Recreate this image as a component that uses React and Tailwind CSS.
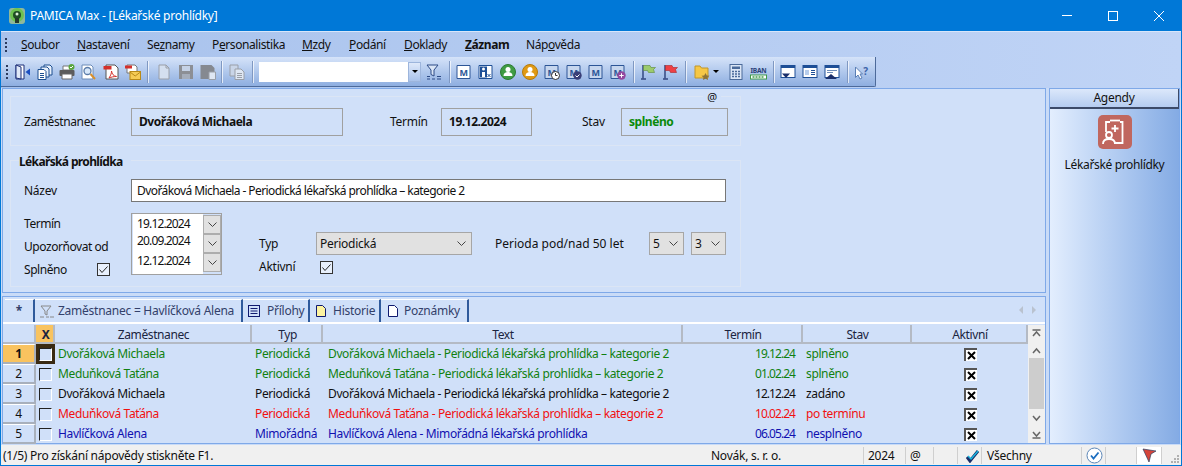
import React from "react";

const font = "font-['Noto_Sans',sans-serif] text-[12px] tracking-[-0.25px]";

// toolbar icons, all drawn on a 16x16 box
const Svg = ({ children, className = "w-4 h-4" }) => (
    <svg viewBox="0 0 16 16" className={className} fill="none">{children}</svg>
);

const Door = () => (
    <Svg><path d="M1 1h8v14H1z" fill="#fff" stroke="#1c2f78" /><path d="M1 1l5 2v12l-5-1z" fill="#dfe8f8" stroke="#1c2f78" /><path d="M15 4.500v7L10.500 8z" fill="#1c4fc0" /></Svg>
);
const Copies = () => (
    <Svg><path d="M7 1h6l2 2v8H7z" fill="#e8f0fc" stroke="#1c4f90" /><path d="M4 3h6l2 2v8H4z" fill="#e8f0fc" stroke="#1c4f90" /><path d="M1 5.500h6l2 2v8H1z" fill="#fff" stroke="#1c4f90" /><path d="M3 9.500h4M3 11.500h4M3 13.500h4" stroke="#1c4f90" /></Svg>
);
const Printer = () => (
    <Svg><path d="M4 2h7v4H4z" fill="#fff" stroke="#777" /><rect x="0.500" y="6" width="15" height="6" rx="1" fill="#5c5c5c" /><path d="M3 10h10v5H3z" fill="#fff" stroke="#666" /><circle cx="12.500" cy="3" r="3" fill="#5aa63c" /><path d="M11 3l1 1 2-2" stroke="#fff" /></Svg>
);
const Preview = () => (
    <Svg><path d="M1 1h9l2 2v12H1z" fill="#fff" stroke="#6d8cb8" /><circle cx="6.500" cy="7" r="3.500" fill="#d8e8fa" stroke="#5a7ba8" strokeWidth="1.300" /><path d="M9.500 10l4.500 5" stroke="#d9902c" strokeWidth="2" /></Svg>
);
const Pdf = () => (
    <Svg><path d="M3 1h9l3 3v11H3z" fill="#fff" stroke="#555" /><rect x="0.500" y="2" width="8" height="3.500" fill="#d4302b" /><path d="M6 14c2-3 2.500-5 2.500-7 .5 3 2 5 5 5.500-3 0-5 .5-7.500 1.500z" stroke="#d4302b" /></Svg>
);
const PdfMail = () => (
    <Svg><path d="M2 1h8l2 2v6H2z" fill="#fff" stroke="#777" /><rect x="0" y="1.500" width="7" height="3" fill="#d4302b" /><rect x="5" y="7.500" width="10.500" height="8" fill="#f6cb55" stroke="#b98a18" /><path d="M5 8l5.200 4 5.300-4" stroke="#b98a18" /></Svg>
);
const Blank = () => (
    <Svg><path d="M3 1h7l3 3v11H3z" fill="#d4dfef" stroke="#9a9fa8" /><path d="M10 1v3h3" stroke="#9a9fa8" /></Svg>
);
const Save = () => (
    <Svg><path d="M1 1h14v14H1z" fill="#8c8f95" /><rect x="4" y="2" width="8" height="5" fill="#c5d2e6" /><rect x="4" y="10" width="8" height="5" fill="#a5adba" /></Svg>
);
const SaveAll = () => (
    <Svg><path d="M0.500 1h11l3 3v4h-3v7h-11z" fill="#858990" /><path d="M9 8h6.500v7.500H9z" fill="#dfe7f3" stroke="#9a9fa8" /></Svg>
);
const CopyGray = () => (
    <Svg><path d="M1 1h8v11H1z" fill="#c9d5e8" stroke="#9a9fa8" /><path d="M6 5h6l3 3v7.500H6z" fill="#dfe7f3" stroke="#9a9fa8" /><path d="M8 9.500h5M8 11.500h5M8 13.500h5" stroke="#9a9fa8" /></Svg>
);
const FilterList = () => (
    <Svg><path d="M1 1h11L8 6v6l-3-1.500V6z" fill="#dbe6f6" stroke="#2c4a86" /><path d="M1 12.500h3M1 15h3M6 15h3M11 12.500h4M11 15h4" stroke="#2c4a86" /></Svg>
);
const MBox = ({ dim }) => (
    <>
        <path d="M1 1.500h13v13H1z" fill={dim ? "#c6d6ee" : "#fff"} stroke="#2c5596" />
        <text x="7.500" y="11.500" textAnchor="middle" fontSize="9" fontWeight="700" fontFamily="Noto Sans" fill="#2c5596">M</text>
    </>
);
const M = ({ dim }) => <Svg><MBox dim={dim} /></Svg>;
const PersonX = () => (
    <Svg><path d="M1 1.500h13v13H1z" fill="#fff" stroke="#1e4f96" /><rect x="2" y="2.500" width="7" height="11" fill="#1e4f96" /><circle cx="5.500" cy="5" r="1.500" fill="#fff" /><path d="M4 8h3v5H4z" fill="#fff" /><path d="M9.500 10l3 3M12.500 10l-3 3" stroke="#1e4f96" /></Svg>
);
const PersonRound = ({ bg, edge }) => (
    <Svg><circle cx="8" cy="8" r="7.500" fill={bg} stroke={edge} /><circle cx="8" cy="5.500" r="2.500" fill="#fff" /><path d="M3.500 12c0-3 2-4 4.500-4s4.500 1 4.500 4z" fill="#fff" /></Svg>
);
const MClock = () => (
    <Svg><MBox dim /><circle cx="11.500" cy="11.500" r="4" fill="#fff" stroke="#333" /><path d="M11.500 9v2.500h2" stroke="#333" /></Svg>
);
const MCheck = () => (
    <Svg><MBox dim /><circle cx="11.500" cy="11.500" r="4.200" fill="#3a3f78" /><path d="M9.500 11.500l1.500 1.500 2.500-2.500" stroke="#fff" /></Svg>
);
const MPlus = () => (
    <Svg><MBox dim /><circle cx="11.500" cy="11.500" r="4.200" fill="#94479f" /><path d="M9.300 11.500h4.400M11.500 9.300v4.400" stroke="#fff" /></Svg>
);
const Flag = ({ fill, edge }) => (
    <Svg><path d="M3 1v13.500" stroke="#2c3f7a" strokeWidth="1.400" /><path d="M1 15h5" stroke="#2c3f7a" strokeWidth="1.400" /><path d="M3.500 1.500h6.500l1 2h4.500l-2 2 1 3h-6l-1-2h-4z" fill={fill} stroke={edge} strokeWidth="0.600" /></Svg>
);
const Folder = () => (
    <Svg><path d="M1 2h5l1.500 2h6.500v10H1z" fill="#f6c745" stroke="#c0962a" /><path d="M11.500 9l1.300 2.500 2.700.3-2 1.700.6 2.500-2.600-1.300-2.600 1.300.6-2.500-2-1.700 2.700-.3z" fill="#8e7436" /></Svg>
);
const Calc = () => (
    <Svg><rect x="2" y="0.500" width="12" height="15" fill="#dbe6f6" stroke="#4a6a9a" /><rect x="4" y="2.500" width="8" height="2.500" fill="#4a6a9a" /><path d="M4 7.500h2M7 7.500h2M10 7.500h2M4 10h2M7 10h2M10 10h2M4 12.500h2M7 12.500h2M10 12.500h2" stroke="#4a6a9a" strokeWidth="1.400" /></Svg>
);
const Iban = () => (
    <svg viewBox="0 0 17 16" className="w-[17px] h-4" fill="none">
        <text x="0.500" y="8.500" textLength="16" lengthAdjust="spacingAndGlyphs" fontSize="7" fontWeight="700" fontFamily="Noto Sans" fill="#2b3f78">IBAN</text>
        <rect x="0.500" y="11" width="16" height="4" fill="#fff" stroke="#3f9a4a" />
        <path d="M2.500 13h12" stroke="#3f9a4a" strokeWidth="1.600" strokeDasharray="2 1" />
    </svg>
);
const Win = ({ variant }) => (
    <Svg>
        <rect x="1" y="1.500" width="14" height="12" fill="#fff" stroke="#1e4f96" />
        <rect x="1" y="1.500" width="14" height="2.500" fill="#1e4f96" />
        {variant === "down" && <path d="M2 9.500h8L6 14z" fill="#1b2f6a" />}
        {variant === "list" && <><path d="M3 6h4v5H3z" fill="#b7cdec" /><path d="M9 6.500h4M9 8.500h4M9 10.500h4" stroke="#1e4f96" /></>}
        {variant === "up" && <><path d="M3 6.500h10M3 8.500h6" stroke="#6d8cb8" /><path d="M1 15l6-5 6 5z" fill="#1b2f6a" /></>}
    </Svg>
);
const HelpArrow = () => (
    <Svg><path d="M1.500 3l7 7H6l2 4-2 1-2-4-2.500 2.500z" fill="#fff" stroke="#5b7fb5" /><text x="11.500" y="10.500" textAnchor="middle" fontSize="10" fontWeight="700" fontFamily="Noto Sans" fill="#3c63a8">?</text></Svg>
);

const Grip = () => (
    <div className="flex flex-col gap-[2px] w-[2px]">
        {[0, 1, 2, 3].map((i) => <div key={i} className="w-[2px] h-[2px] bg-[#2b3a5c]" />)}
    </div>
);

const ToolSep = ({ className = "" }) => (
    <div className={`w-[2px] h-[22px] border-l border-[#7f98c2] bg-white/70 shrink-0 ${className}`} />
);

const Tool = ({ children }) => <div className="w-[22px] h-[22px] flex items-center justify-center shrink-0">{children}</div>;

// underlined access key in the menu
const menu = [
    { before: "", key_: "S", after: "oubor", w: "w-[56px]" },
    { before: "", key_: "N", after: "astavení", w: "w-[70px]" },
    { before: "Se", key_: "z", after: "namy", w: "w-[65px]" },
    { before: "P", key_: "e", after: "rsonalistika", w: "w-[90px]" },
    { before: "", key_: "M", after: "zdy", w: "w-[47px]" },
    { before: "", key_: "P", after: "odání", w: "w-[55px]" },
    { before: "", key_: "D", after: "oklady", w: "w-[61px]" },
    { before: "", key_: "Z", after: "áznam", w: "w-[61px] font-bold", },
    { before: "Náp", key_: "o", after: "věda", w: "w-[70px]" },
];

const ReadField = ({ className, children }) => (
    <div className={`h-[28px] border border-[#a0a0a0] flex items-center pl-[7px] font-bold tracking-[-0.45px] ${className}`}>{children}</div>
);

const Check = () => (
    <div className="w-[13px] h-[13px] border border-[#333] bg-[#e8f0fc] flex items-center justify-center">
        <svg viewBox="0 0 11 11" className="w-[11px] h-[11px]" fill="none"><path d="M1.500 5.500l2.500 3L9.500 2.500" stroke="#222" /></svg>
    </div>
);

const Chevron = ({ className = "w-[9px] h-[5px]" }) => (
    <svg viewBox="0 0 9 5" className={className} fill="none"><path d="M0.500 0.500L4.500 4.500L8.500 0.500" stroke="#444" /></svg>
);

const DateSpin = () => (
    <div className="w-[18px] h-[19px] bg-[#e1e1e1] border border-[#adadad] flex items-center justify-center">
        <Chevron />
    </div>
);

const Select = ({ className, children }) => (
    <div className={`h-[23px] bg-[#e1e1e1] border border-[#a6a6a6] flex items-center justify-between pl-[3px] pr-[5px] shrink-0 ${className}`}>
        <span>{children}</span>
        <Chevron />
    </div>
);

const rows = [
    { n: 1, name: "Dvořáková Michaela", typ: "Periodická", text: "Dvořáková Michaela - Periodická lékařská prohlídka – kategorie 2", date: "19.12.24", stav: "splněno", color: "text-[#108010]", active: true },
    { n: 2, name: "Meduňková Taťána", typ: "Periodická", text: "Meduňková Taťána - Periodická lékařská prohlídka – kategorie 2", date: "01.02.24", stav: "splněno", color: "text-[#108010]" },
    { n: 3, name: "Dvořáková Michaela", typ: "Periodická", text: "Dvořáková Michaela - Periodická lékařská prohlídka – kategorie 2", date: "12.12.24", stav: "zadáno", color: "text-[#101010]" },
    { n: 4, name: "Meduňková Taťána", typ: "Periodická", text: "Meduňková Taťána - Periodická lékařská prohlídka – kategorie 2", date: "10.02.24", stav: "po termínu", color: "text-[#f01010]" },
    { n: 5, name: "Havlíčková Alena", typ: "Mimořádná", text: "Havlíčková Alena - Mimořádná lékařská prohlídka", date: "06.05.24", stav: "nesplněno", color: "text-[#1010b0]" },
];

const HeadCell = ({ className, children }) => (
    <div className={`h-[19px] pt-[2px] pl-[2px] border-r-2 border-b-2 border-[#b4bac4] flex items-center justify-center text-[#1a2440] tracking-[-0.4px] shrink-0 ${className}`}>{children}</div>
);

const ActiveBox = () => (
    <div className="w-[13px] h-[13px] bg-white border-t-2 border-l-2 border-[#555] flex items-center justify-center">
        <svg viewBox="0 0 9 9" className="w-[9px] h-[9px]" fill="none"><path d="M1 1l7 7M8 1l-7 7" stroke="#000" strokeWidth="2" /></svg>
    </div>
);

const ScrollArrow = ({ d }) => (
    <svg viewBox="0 0 9 8" className="w-[9px] h-[8px]" fill="none"><path d={d} stroke="#666" strokeWidth="1.500" /></svg>
);

const Tab = ({ className, icon, children }) => (
    <div className={`h-[23px] bg-[#d0e0f9] border-r-2 border-[#2f5a9c] border-t border-t-white flex items-center text-[#33406a] shrink-0 ${className}`}>
        {icon}
        {children}
    </div>
);

const StatusCell = ({ className, children }) => (
    <div className={`h-[17px] border-r border-[#cfcfcf] flex items-center shrink-0 ${className}`}>{children}</div>
);

export default function App() {
    return (
        <div className={`w-[1182px] h-[466px] overflow-hidden flex flex-col bg-[#0078d7] text-[#111] ${font}`}>
            {/* title bar */}
            <div className="h-[31px] shrink-0 flex items-center bg-[#0078d7] text-white">
                <svg viewBox="0 0 16 16" className="w-4 h-4 ml-[9px]">
                    <rect width="16" height="16" rx="3" fill="#8fb89a" />
                    <circle cx="8" cy="7" r="7" fill="#6cc24f" />
                    <circle cx="8" cy="7" r="4" fill="#1f4d24" />
                    <circle cx="8" cy="6" r="1.500" fill="#dff0d8" />
                    <rect x="6" y="10" width="4" height="5" fill="#24382a" />
                </svg>
                <span className="ml-[5px]">PAMICA Max - [Lékařské prohlídky]</span>
                <div className="ml-auto flex items-center">
                    <div className="w-[46px] flex justify-center"><div className="w-[10px] h-[1px] bg-white" /></div>
                    <div className="w-[46px] flex justify-center"><div className="w-[10px] h-[10px] border border-white" /></div>
                    <div className="w-[46px] flex justify-center">
                        <svg viewBox="0 0 10 10" className="w-[10px] h-[10px]" fill="none"><path d="M0 0l10 10M10 0L0 10" stroke="#fff" /></svg>
                    </div>
                </div>
            </div>

            <div className="flex-1 min-h-0 mx-[1px] mb-[1px] flex flex-col bg-[#c9dbf7] border-t border-[#d8e6fa]">
                {/* menu + toolbar */}
                <div className="h-[56px] shrink-0 bg-gradient-to-r from-[#a8c2ec] to-[#c0d4f6]">
                    <div className="h-[25px] flex items-center pl-[4px]">
                        <Grip />
                        <div className="flex ml-[14px] tracking-[-0.4px]">
                            {menu.map((m) => (
                                <div key={m.after} className={`${m.w} shrink-0`}>
                                    {m.before}<span className="underline">{m.key_}</span>{m.after}
                                </div>
                            ))}
                        </div>
                    </div>
                    <div className="w-[875px] h-[30px] flex items-center pl-[5px] bg-gradient-to-b from-[#d5e3f9] to-[#8eaee0] border-r border-b border-[#4d6a9a] rounded-br-[2px]">
                        <Grip />
                        <div className="flex items-center ml-[4px]">
                            <Tool><Door /></Tool><Tool><Copies /></Tool><Tool><Printer /></Tool><Tool><Preview /></Tool><Tool><Pdf /></Tool><Tool><PdfMail /></Tool>
                            <ToolSep className="ml-[3px] mr-[4px]" />
                            <Tool><Blank /></Tool><Tool><Save /></Tool><Tool><SaveAll /></Tool>
                            <ToolSep className="ml-[2px] mr-[3px]" />
                            <Tool><CopyGray /></Tool>
                            <ToolSep className="ml-[4px] mr-[5px]" />
                            <div className="w-[162px] h-[20px] bg-white flex justify-end shrink-0">
                                <div className="w-[13px] h-full bg-gradient-to-b from-[#dfe9fa] to-[#a9c2ea] border border-[#9db5dc] flex items-center justify-center">
                                    <div className="w-0 h-0 border-l-[3px] border-r-[3px] border-t-[3px] border-l-transparent border-r-transparent border-t-black" />
                                </div>
                            </div>
                            <div className="ml-[2px]"><Tool><FilterList /></Tool></div>
                            <ToolSep className="ml-[4px] mr-[2px]" />
                            <Tool><M /></Tool><Tool><PersonX /></Tool>
                            <Tool><PersonRound bg="#3f9c43" edge="#2d7a33" /></Tool>
                            <Tool><PersonRound bg="#e09a14" edge="#b57a0c" /></Tool>
                            <Tool><MClock /></Tool><Tool><MCheck /></Tool><Tool><M dim /></Tool><Tool><MPlus /></Tool>
                            <ToolSep className="ml-[4px] mr-[2px]" />
                            <Tool><Flag fill="#9ccb6c" edge="#5c8a3a" /></Tool>
                            <Tool><Flag fill="#ee4045" edge="#a8262a" /></Tool>
                            <ToolSep className="ml-[4px] mr-[4px]" />
                            <Tool><Folder /></Tool>
                            <div className="w-0 h-0 border-l-[3px] border-r-[3px] border-t-[3px] border-l-transparent border-r-transparent border-t-black" />
                            <div className="w-[6px]" />
                            <Tool><Calc /></Tool><Tool><Iban /></Tool>
                            <ToolSep className="ml-[4px] mr-[2px]" />
                            <Tool><Win variant="down" /></Tool><Tool><Win variant="list" /></Tool><Tool><Win variant="up" /></Tool>
                            <ToolSep className="ml-[4px] mr-[2px]" />
                            <Tool><HelpArrow /></Tool>
                        </div>
                    </div>
                </div>

                <div className="flex-1 min-h-0 flex px-[1px] bg-[#c9dbf7]">
                    <div className="w-[1044px] shrink-0 flex flex-col gap-[3px]">
                        {/* form */}
                        <div className="h-[205px] shrink-0 bg-[#d0e0f9] border border-[#7fa9e8] pl-[7px] pt-[7px]">
                            <div className="relative w-[731px] h-[50px] border border-[#dbe5f5] flex items-center pl-[13px] pt-[2px]">
                                <span className="absolute right-[19px] -top-[8px] px-[4px] bg-[#d0e0f9] text-[11px]">@</span>
                                <span className="w-[107px] shrink-0 tracking-[-0.4px]">Zaměstnanec</span>
                                <ReadField className="w-[212px]">Dvořáková Michaela</ReadField>
                                <span className="ml-[47px] w-[51px]">Termín</span>
                                <ReadField className="w-[91px]">19.12.2024</ReadField>
                                <span className="ml-[50px] w-[39px]">Stav</span>
                                <ReadField className="w-[107px] text-[#0a8a0a]">splněno</ReadField>
                            </div>
                            <div className="relative w-[731px] h-[127px] mt-[14px] border border-[#dbe5f5] pl-[13px] pt-[18px]">
                                <span className="absolute left-[8px] -top-[8px] pr-[8px] bg-[#d0e0f9] font-bold tracking-[-0.64px]">Lékařská prohlídka</span>
                                <div className="flex items-center">
                                    <span className="w-[107px] shrink-0">Název</span>
                                    <div className="w-[595px] h-[23px] bg-white border border-[#777] flex items-center pl-[5px] tracking-[-0.58px]">
                                        Dvořáková Michaela - Periodická lékařská prohlídka – kategorie 2
                                    </div>
                                </div>
                                <div className="flex mt-[11px]">
                                    <div className="w-[107px] shrink-0 flex flex-col tracking-[-0.45px]">
                                        <span className="h-[23px] flex items-center mt-[-1px]">Termín</span>
                                        <span className="h-[23px] flex items-center">Upozorňovat od</span>
                                        <span className="h-[23px] flex items-center justify-between pr-[21px]">Splněno <Check /></span>
                                    </div>
                                    <div className="w-[91px] h-[62px] shrink-0 bg-[#d0e0f9] border border-[#a0a0a0] flex pl-[1px]">
                                        <div className="w-[70px] h-full bg-white flex flex-col pl-[4px] pt-[1px] tracking-[-0.85px]">
                                            <span className="h-[18px] flex items-center">19.12.2024</span>
                                            <span className="h-[18px] flex items-center mt-[-1px]">20.09.2024</span>
                                            <span className="h-[19px] flex items-center mt-[1px]">12.12.2024</span>
                                        </div>
                                        <div className="flex flex-col pt-[1px]">
                                            <DateSpin /><DateSpin /><DateSpin />
                                        </div>
                                    </div>
                                    <div className="ml-[37px] w-[57px] shrink-0 flex flex-col pt-[19px]">
                                        <span className="h-[23px] flex items-center">Typ</span>
                                        <span className="h-[23px] flex items-center">Aktivní</span>
                                    </div>
                                    <div className="w-[156px] shrink-0 flex flex-col pt-[19px]">
                                        <Select className="w-[156px]">Periodická</Select>
                                        <div className="mt-[6px] ml-[4px]"><Check /></div>
                                    </div>
                                    <span className="ml-[23px] w-[154px] h-[23px] mt-[19px] shrink-0 flex items-center tracking-normal">Perioda pod/nad 50 let</span>
                                    <Select className="w-[35px] mt-[19px]">5</Select>
                                    <Select className="w-[35px] mt-[19px] ml-[7px]">3</Select>
                                </div>
                            </div>
                        </div>

                        {/* grid */}
                        <div className="flex-1 min-h-0 bg-[#d0e0f9] border border-[#7fa9e8] flex flex-col">
                            <div className="h-[27px] shrink-0 flex items-end pl-[2px] border-b-2 border-white">
                                <Tab className="w-[30px] justify-center font-bold text-[#1c2f8a]">*</Tab>
                                <Tab className="w-[208px] pl-[5px] gap-[4px]" icon={
                                    <svg viewBox="0 0 14 13" className="w-[14px] h-[13px]" fill="none"><path d="M1 1h10L7 6v4L5 9V6z" stroke="#888" /><path d="M0 12h4M6 12h3M10 12h4" stroke="#888" /></svg>
                                }>Zaměstnanec = Havlíčková Alena</Tab>
                                <Tab className="w-[67px] pl-[5px] gap-[7px]" icon={
                                    <svg viewBox="0 0 12 12" className="w-[12px] h-[12px]" fill="none"><rect x="0.500" y="0.500" width="11" height="11" stroke="#101a70" /><path d="M2.500 3.500h7M2.500 6h7M2.500 8.500h7" stroke="#101a70" /></svg>
                                }>Přílohy</Tab>
                                <Tab className="w-[71px] pl-[6px] gap-[7px]" icon={
                                    <svg viewBox="0 0 10 12" className="w-[10px] h-[12px]" fill="none"><path d="M0.500 0.500h6l3 3v8h-9z" fill="#fdf3a0" stroke="#101a70" /></svg>
                                }>Historie</Tab>
                                <Tab className="w-[88px] pl-[7px] gap-[6px]" icon={
                                    <svg viewBox="0 0 10 12" className="w-[10px] h-[12px]" fill="none"><path d="M0.500 0.500h6l3 3v8h-9z" fill="#fff" stroke="#101a70" /></svg>
                                }>Poznámky</Tab>
                                <div className="ml-auto mr-[9px] mb-[8px] flex gap-[9px]">
                                    <div className="w-0 h-0 border-y-[4px] border-r-[4px] border-y-transparent border-r-[#b9c2cf]" />
                                    <div className="w-0 h-0 border-y-[4px] border-l-[4px] border-y-transparent border-l-[#b9c2cf]" />
                                </div>
                            </div>
                            <div className="flex-1 min-h-0 flex mt-[1px]">
                                <div className="flex-1 min-w-0">
                                    <div className="flex">
                                        <HeadCell className="w-[33px]" />
                                        <HeadCell className="w-[19px] bg-[#f9c35f] font-bold">X</HeadCell>
                                        <HeadCell className="w-[197px]">Zaměstnanec</HeadCell>
                                        <HeadCell className="w-[71px]">Typ</HeadCell>
                                        <HeadCell className="w-[360px]">Text</HeadCell>
                                        <HeadCell className="w-[120px]">Termín</HeadCell>
                                        <HeadCell className="w-[109px]">Stav</HeadCell>
                                        <HeadCell className="w-[116px]">Aktivní</HeadCell>
                                    </div>
                                    {rows.map((r) => (
                                        <div key={r.n} className={`flex h-[20px] items-center tracking-[-0.37px] ${r.color}`}>
                                            <div className={`w-[33px] h-[20px] shrink-0 border-r-2 border-b-2 border-[#a8b0bc] border-t border-t-white flex items-center justify-center text-[#111] ${r.active ? "bg-[#f9c35f] font-bold" : "bg-[#d0e0f9]"}`}>{r.n}</div>
                                            <div className={`w-[19px] h-[20px] shrink-0 flex items-center justify-center ${r.active ? "bg-[#3a2a12]" : ""}`}>
                                                <div className="w-[13px] h-[13px] border-t border-l border-[#222] border-r border-b border-r-white border-b-white bg-[#d0e0f9]" />
                                            </div>
                                            <div className="w-[197px] shrink-0 pl-[3px]">{r.name}</div>
                                            <div className="w-[71px] shrink-0 pl-[3px]">{r.typ}</div>
                                            <div className="w-[360px] shrink-0 pl-[5px] whitespace-nowrap">{r.text}</div>
                                            <div className="w-[112px] shrink-0 text-right tracking-[-0.95px]">{r.date}</div>
                                            <div className="w-[117px] shrink-0 pl-[11px]">{r.stav}</div>
                                            <div className="w-[116px] shrink-0 flex justify-center"><ActiveBox /></div>
                                        </div>
                                    ))}
                                </div>
                                <div className="w-[17px] shrink-0 bg-[#f0f0f0] flex flex-col items-center">
                                    <div className="h-[16px] flex items-center"><ScrollArrow d="M0.500 1h8M1 7l3.500-4L8 7" /></div>
                                    <div className="h-[17px] pt-[3px] flex items-center"><ScrollArrow d="M1 6l3.500-4L8 6" /></div>
                                    <div className="w-[15px] h-[51px] bg-[#cdcdcd]" />
                                    <div className="flex-1" />
                                    <div className="h-[17px] flex items-center"><ScrollArrow d="M1 2l3.500 4L8 2" /></div>
                                    <div className="h-[17px] flex items-center"><ScrollArrow d="M1 1l3.500 4L8 1M0.500 7h8" /></div>
                                </div>
                            </div>
                        </div>
                    </div>

                    {/* agendy */}
                    <div className="w-[131px] ml-[3px] shrink-0 border border-[#7fa9e8] flex flex-col items-center bg-gradient-to-r from-[#e3eefe] to-[#84abe4]">
                        <div className="w-full h-[20px] shrink-0 flex items-center justify-center bg-gradient-to-b from-[#dce8fb] to-[#b5ccf0] border-b-2 border-[#3c4a68] border-r border-r-[#3c4a68]">Agendy</div>
                        <div className="w-[34px] h-[34px] mt-[6px] rounded-[5px] bg-[#c0675f] flex items-center justify-center">
                            <svg viewBox="0 0 34 34" className="w-[34px] h-[34px]" fill="none" stroke="#fff" strokeWidth="1.800">
                                <path d="M8 17V7h4M22 7h2.500v21H17" />
                                <path d="M12 5.500h10" />
                                <path d="M17 10v7M13.500 13.500h7" />
                                <circle cx="11" cy="20" r="3" />
                                <path d="M5 29c0-4 3-5 6-5s6 1 6 5" />
                            </svg>
                        </div>
                        <div className="mt-[7px] whitespace-nowrap tracking-[-0.35px]">Lékařské prohlídky</div>
                    </div>
                </div>

                {/* status bar */}
                <div className="h-[21px] shrink-0 bg-[#f0f0f0] flex items-center border-t border-[#c9dbf7] pt-[1px]">
                    <div className="w-[705px] pl-[2px] shrink-0">(1/5) Pro získání nápovědy stiskněte F1.</div>
                    <StatusCell className="w-[158px] pl-[5px]">Novák, s. r. o.</StatusCell>
                    <StatusCell className="w-[42px] pl-[4px]">2024</StatusCell>
                    <StatusCell className="w-[28px] pl-[4px]">@</StatusCell>
                    <StatusCell className="w-[24px]" />
                    <StatusCell className="w-[24px] pl-[8px]">
                        <svg viewBox="0 0 14 14" className="w-[14px] h-[14px]" fill="none"><path d="M1 8l3 4 8-10" stroke="#1b2f6a" strokeWidth="3" /><path d="M2 7l3 3 7-8" stroke="#18b6e0" strokeWidth="1.500" /></svg>
                    </StatusCell>
                    <StatusCell className="w-[100px] pl-[5px]">Všechny</StatusCell>
                    <StatusCell className="w-[24px] pl-[4px]">
                        <svg viewBox="0 0 17 17" className="w-[17px] h-[17px]" fill="none"><circle cx="8.500" cy="8.500" r="7.500" fill="#fff" stroke="#5b86b8" /><path d="M5 8.500l2.500 3 5-6" stroke="#1c6ec0" strokeWidth="1.800" /></svg>
                    </StatusCell>
                    <StatusCell className="w-[31px]" />
                    <StatusCell className="w-[25px] justify-center bg-white">
                        <svg viewBox="0 0 15 15" className="w-[15px] h-[15px]" fill="none"><path d="M1 1l13 2-5 3-2 8z" fill="#d5443a" stroke="#2a3f60" strokeWidth="0.700" /></svg>
                    </StatusCell>
                    <div className="flex-1 flex justify-end items-end h-[17px] pr-[1px]">
                        <svg viewBox="0 0 10 10" className="w-[10px] h-[10px]"><path d="M7 1h2v2H7zM4 4h2v2H4zM7 4h2v2H7zM1 7h2v2H1zM4 7h2v2H4zM7 7h2v2H7z" fill="#b0b0b0" /></svg>
                    </div>
                </div>
            </div>
        </div>
    );
}
